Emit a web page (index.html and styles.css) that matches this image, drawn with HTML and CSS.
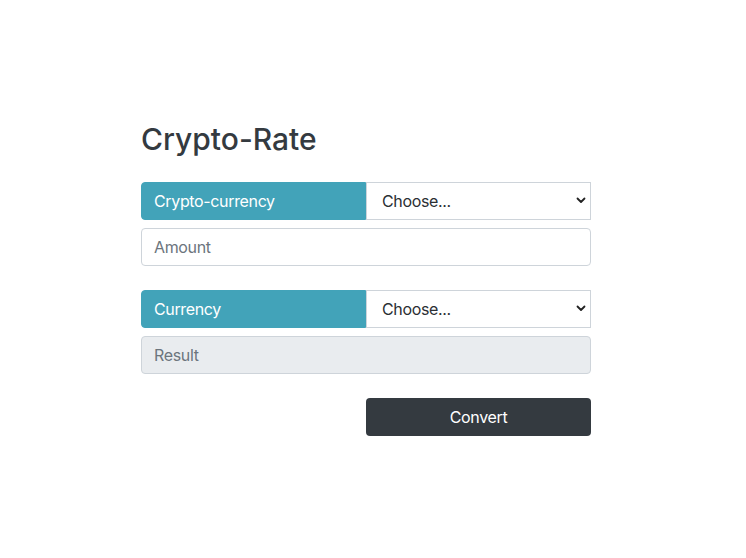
FILE: index.html
```html
<!DOCTYPE html>
<html>
<head>
<meta charset="utf-8">
<link rel="stylesheet" href="styles.css">
</head>
<body>
<main class="app">
  <h1 class="title">Crypto-Rate</h1>
  <form class="form">
    <div class="input-group">
      <label class="group-label">Crypto-currency</label>
      <div class="select-wrap">
        <select class="select"><option>Choose...</option></select>
        <svg class="chev" width="10" height="7" viewBox="0 0 10 7"><path d="M1.5 1.5 L5 5 L8.5 1.5" fill="none" stroke="#222" stroke-width="1.8" stroke-linecap="round" stroke-linejoin="round"/></svg>
      </div>
    </div>
    <input class="field" type="text" placeholder="Amount">

    <div class="input-group spaced">
      <label class="group-label">Currency</label>
      <div class="select-wrap">
        <select class="select"><option>Choose...</option></select>
        <svg class="chev" width="10" height="7" viewBox="0 0 10 7"><path d="M1.5 1.5 L5 5 L8.5 1.5" fill="none" stroke="#222" stroke-width="1.8" stroke-linecap="round" stroke-linejoin="round"/></svg>
      </div>
    </div>
    <input class="field readonly" type="text" placeholder="Result" readonly>

    <div class="actions">
      <button type="button" class="btn">Convert</button>
    </div>
  </form>
</main>
</body>
</html>
```

FILE: styles.css
```css
* { box-sizing: border-box; }
html, body { margin: 0; background: #fff; }
body {
  font-family: Inter, "Liberation Sans", Arial, sans-serif;
  font-size: 16px;
  color: #212529;
}
.app {
  width: 450px;
  margin-left: 141px;
  padding-top: 120px;
}
.title {
  margin: 0 0 24px;
  font-size: 30px;
  font-weight: 500;
  line-height: 38px;
  color: #343a40;
}
.form { display: flex; flex-direction: column; letter-spacing: -0.35px; }
.input-group {
  display: flex;
  height: 38px;
}
.input-group.spaced { margin-top: 24px; }
.group-label {
  flex: 0 0 225px;
  display: flex;
  align-items: center;
  padding: 0 12px;
  background: #42a3b9;
  color: #fff;
  border: 1px solid #42a3b9;
  border-radius: 4px 0 0 4px;
  font-size: 16px;
}
.select-wrap {
  position: relative;
  flex: 1;
}
.select {
  appearance: none;
  -webkit-appearance: none;
  width: 100%;
  height: 38px;
  margin: 0;
  padding: 0 15px;
  border: 1px solid #ced4da;
  border-radius: 0;
  background: #fff;
  font-family: inherit;
  font-size: 16px;
  letter-spacing: -0.35px;
  color: #2b2f33;
}
.chev {
  position: absolute;
  right: 5px;
  top: 15px;
  pointer-events: none;
}
.field {
  margin-top: 8px;
  height: 38px;
  width: 100%;
  padding: 0 12px;
  border: 1px solid #ced4da;
  border-radius: 4px;
  background: #fff;
  font-family: inherit;
  font-size: 16px;
  letter-spacing: -0.35px;
  color: #495057;
}
.field::placeholder { color: #6c757d; }
.field.readonly { background: #e9ecef; }
.actions {
  display: flex;
  justify-content: flex-end;
  margin-top: 24px;
}
.btn {
  width: 225px;
  height: 38px;
  border: 0;
  border-radius: 4px;
  background: #343a40;
  color: #fff;
  font-family: inherit;
  font-size: 16px;
  letter-spacing: -0.35px;
}
```
